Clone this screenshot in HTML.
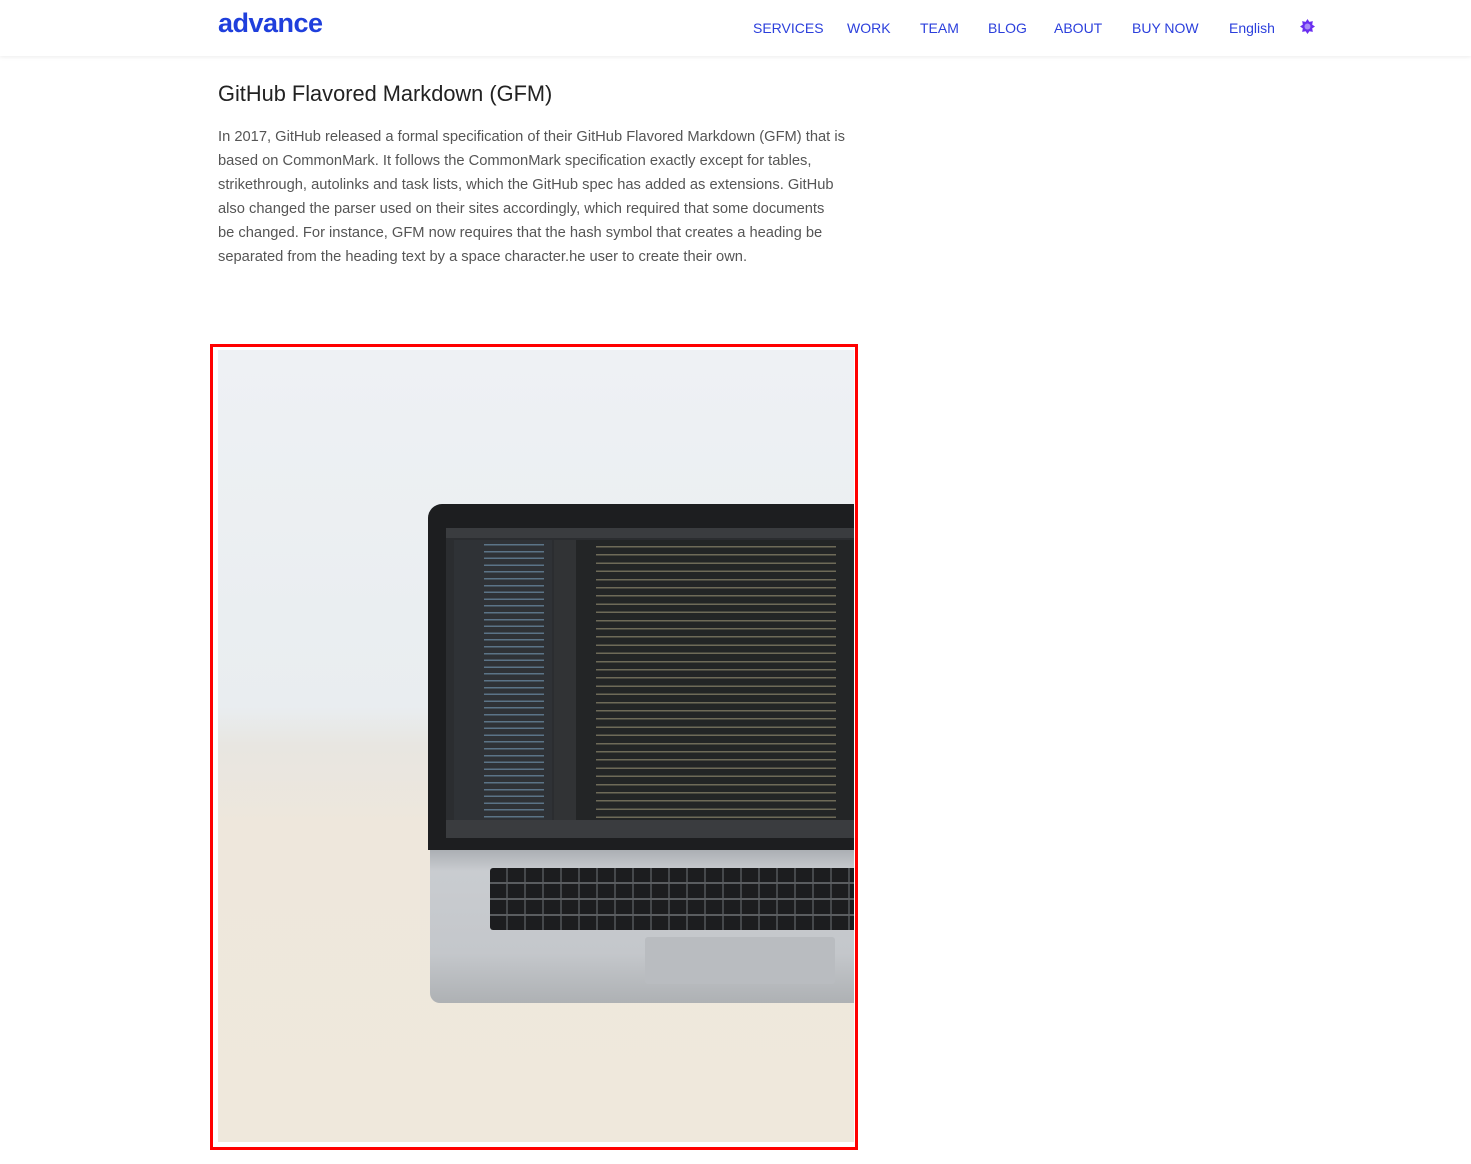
<!DOCTYPE html>
<html><head><meta charset="utf-8"><style>
*{margin:0;padding:0;box-sizing:border-box}
body{width:1471px;height:1164px;background:#fff;font-family:"Liberation Sans",sans-serif;position:relative;overflow:hidden}
.hdr{position:absolute;left:0;top:0;width:1471px;height:56px;background:#fff;box-shadow:0 1px 4px rgba(0,0,0,.08)}
.logo{position:absolute;left:218px;top:8px;font-size:27px;font-weight:bold;color:#1f3fdc;letter-spacing:-0.5px}
.nav{position:absolute;top:20px;font-size:14px;color:#2b3fdc}
h1{position:absolute;left:218px;top:81px;font-size:21.8px;font-weight:normal;color:#222}
.p{position:absolute;left:218px;top:125px;font-size:14.7px;line-height:24px;color:#555;white-space:nowrap}
.frame{position:absolute;left:210px;top:344px;width:648px;height:806px;border:3.5px solid #f00;background:#fff}
.img{position:absolute;left:218px;top:350px;width:636px;height:792px;overflow:hidden;
background:linear-gradient(180deg,#eef1f4 0%,#e9edf0 45%,#e8e6e1 50%,#eee7dc 60%,#efe8dc 100%)}
.abs{position:absolute}
</style></head><body>
<div class="hdr">
<div class="logo">advance</div>
<div class="nav" style="left:753px">SERVICES</div>
<div class="nav" style="left:847px">WORK</div>
<div class="nav" style="left:920px">TEAM</div>
<div class="nav" style="left:988px">BLOG</div>
<div class="nav" style="left:1054px">ABOUT</div>
<div class="nav" style="left:1132px">BUY NOW</div>
<div class="nav" style="left:1229px">English</div>
<svg class="abs" style="left:1300px;top:19px" width="15" height="15" viewBox="0 0 16 16"><g fill="#6a2ff0"><polygon points="8,0 10,3 13.7,2.3 13,6 16,8 13,10 13.7,13.7 10,13 8,16 6,13 2.3,13.7 3,10 0,8 3,6 2.3,2.3 6,3"/></g><circle cx="8" cy="8" r="3.2" fill="#a98cf7"/></svg>
</div>
<h1>GitHub Flavored Markdown (GFM)</h1>
<div class="p">In 2017, GitHub released a formal specification of their GitHub Flavored Markdown (GFM) that is<br>based on CommonMark. It follows the CommonMark specification exactly except for tables,<br>strikethrough, autolinks and task lists, which the GitHub spec has added as extensions. GitHub<br>also changed the parser used on their sites accordingly, which required that some documents<br>be changed. For instance, GFM now requires that the hash symbol that creates a heading be<br>separated from the heading text by a space character.he user to create their own.</div>
<div class="frame"></div>
<div class="img">
 <div class="abs" style="left:212px;top:488px;width:430px;height:165px;background:linear-gradient(180deg,#9a9ea3 0%,#c9ccd0 20%,#c4c7cb 70%,#aeb1b4 100%);border-radius:6px 0 0 10px"></div>
 <div class="abs" style="left:272px;top:518px;width:370px;height:62px;background:#1c1d1f;border-radius:3px;
 background-image:repeating-linear-gradient(90deg,#1a1b1d 0 16px,#45484b 16px 18px),repeating-linear-gradient(180deg,transparent 0 14px,#5a5d60 14px 16px);background-blend-mode:lighten"></div>
 <div class="abs" style="left:427px;top:587px;width:190px;height:47px;background:#b9bcc0;border-radius:3px"></div>
 <div class="abs" style="left:210px;top:154px;width:430px;height:346px;background:#1d1e20;border-radius:14px 0 0 0"></div>
 <div class="abs" style="left:228px;top:178px;width:412px;height:310px;background:#2b2d30">
  <div class="abs" style="left:0;top:0;width:412px;height:10px;background:#3a3c3f"></div>
  <div class="abs" style="left:8px;top:12px;width:98px;height:280px;background:#2f3236;
  background-image:repeating-linear-gradient(180deg,transparent 0 4px,rgba(127,169,201,.55) 4px 5.5px,transparent 5.5px 6.8px);background-size:60px 100%;background-repeat:no-repeat;background-position:30px 0"></div>
  <div class="abs" style="left:108px;top:12px;width:22px;height:280px;background:#313335"></div>
  <div class="abs" style="left:130px;top:12px;width:282px;height:280px;background:#232526;
  background-image:repeating-linear-gradient(180deg,transparent 0 6px,rgba(201,190,150,.45) 6px 7.5px,transparent 7.5px 8.2px);background-size:240px 100%;background-repeat:no-repeat;background-position:20px 0"></div>
  <div class="abs" style="left:0;top:292px;width:412px;height:18px;background:#3a3c3f"></div>
 </div>
</div>
</body></html>
